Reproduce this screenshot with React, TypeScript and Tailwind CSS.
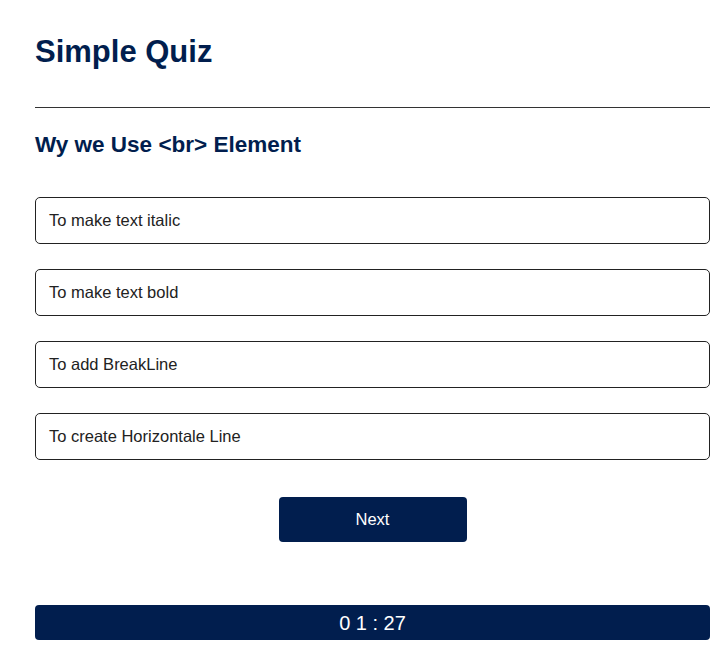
export default function App() {
  const options = [
    "To make text italic",
    "To make text bold",
    "To add BreakLine",
    "To create Horizontale Line",
  ];
  return (
    <div className="min-h-[663px] bg-white font-['Liberation_Sans',Arial,sans-serif]">
      <div className="w-[675px] ml-[35px] pt-[30px]">
        <h1 className="text-[31px] leading-[44px] font-bold text-[#011e4e]">Simple Quiz</h1>
        <hr className="mt-[33px] border-t border-[#333]" />
        <h2 className="mt-[23px] text-[22.5px] leading-[28px] font-bold text-[#011e4e]">
          Wy we Use &lt;br&gt; Element
        </h2>
        <ul className="mt-[38px] flex flex-col gap-[25px]">
          {options.map((o) => (
            <li
              key={o}
              className="h-[47px] flex items-center px-[13px] border border-[#222] rounded-[5px] text-[16.5px] text-[#222]"
            >
              {o}
            </li>
          ))}
        </ul>
        <div className="mt-[37px] flex justify-center">
          <button className="w-[188px] h-[45px] rounded-[4px] bg-[#011e4e] text-white text-[16.5px]">
            Next
          </button>
        </div>
        <div className="mt-[63px] h-[35px] rounded-[4px] bg-[#011e4e] flex items-center justify-center text-white text-[20px]">
          0 1 : 27
        </div>
      </div>
    </div>
  );
}
